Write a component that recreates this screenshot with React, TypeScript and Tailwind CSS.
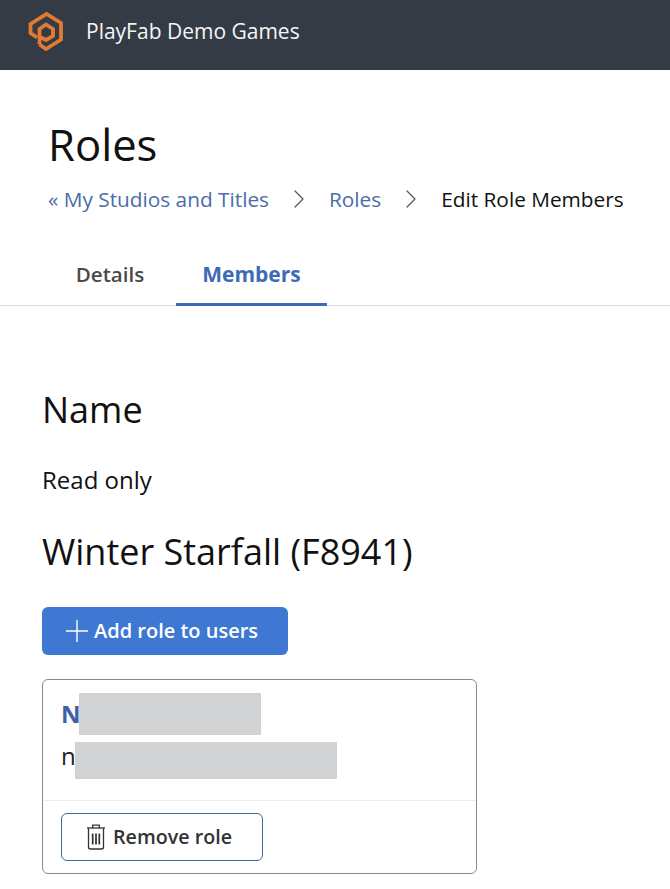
import { ChevronRight } from "lucide-react"

function Logo() {
  return (
    <svg width="50" height="50" viewBox="0 0 50 50" fill="none" stroke="#e07a35" strokeWidth="3.8" strokeLinejoin="miter">
      <path d="M19.5 36.5 L26 41 L41 31.5 V15 L26.5 6 L10.5 16 V25 L17 29.5" />
      <path d="M19.5 36.5 V21 L26 16.5 L33 21 V28 L26 32 L20 29" />
    </svg>
  )
}

function TrashIcon() {
  return (
    <svg width="32" height="32" viewBox="0 0 32 32" fill="none" stroke="#333" strokeWidth="1.3">
      <path d="M12.7 7 V4.2 H19.3 V7" />
      <path d="M7 7 H25" />
      <path d="M8.5 7 V26 Q8.5 28 10.5 28 H21.5 Q23.5 28 23.5 26 V7" />
      <path d="M12.7 12.5 V23.5 M16 12.5 V23.5 M19.3 12.5 V23.5" strokeWidth="1.7" />
    </svg>
  )
}

export default function App() {
  return (
    <div className="h-[889px] w-[670px] overflow-hidden bg-white font-['Open_Sans',sans-serif]">
      {/* Header */}
      <div className="flex h-[70px] items-center bg-[#343b45] pl-[20px]">
        <div className="-mt-[4px]">
          <Logo />
        </div>
        <span className="-mt-[6px] ml-[16px] text-[21px] text-[#f4f5f6]">PlayFab Demo Games</span>
      </div>

      {/* Title and breadcrumb */}
      <div className="pl-[48px] pt-[45px]">
        <h1 className="text-[43.6px] leading-[58px] text-[#111]">Roles</h1>
        <div className="mt-[12px] flex items-center text-[20.8px] leading-[28px] text-[#111]">
          <span className="text-[#4a6da7]">« My Studios and Titles</span>
          <ChevronRight className="mx-[14px] -my-[2px] h-[32px] w-[32px] text-[#555]" strokeWidth={0.9} />
          <span className="text-[#4a6da7]">Roles</span>
          <ChevronRight className="mx-[14px] -my-[2px] h-[32px] w-[32px] text-[#555]" strokeWidth={0.9} />
          <span>Edit Role Members</span>
        </div>
      </div>

      {/* Tabs */}
      <div className="mt-[39px] flex h-[54px] border-b border-[#dcdcdc] pl-[48px]">
        <div className="flex h-[54px] w-[128px] justify-center pr-[4px] pt-[7px] text-[20.6px] font-semibold text-[#4a4a4a]">
          Details
        </div>
        <div className="flex h-[54px] w-[151px] justify-center border-b-[3px] border-[#3f6bb5] pt-[7px] text-[21px] font-bold text-[#3f6bb5]">
          Members
        </div>
      </div>

      {/* Content */}
      <div className="pl-[42px] pt-[79px]">
        <div className="text-[36px] leading-[50px] text-[#111]">Name</div>
        <div className="mt-[29px] text-[24px] leading-[32px] text-[#111]">Read only</div>
        <div className="mt-[31px] text-[36px] leading-[50px] text-[#111]">Winter Starfall (F8941)</div>

        <button className="mt-[30px] flex h-[48px] w-[246px] items-center rounded-[6px] bg-[#3f78d2] pl-[24px] text-[20px] font-semibold text-white">
          <svg width="22" height="22" viewBox="0 0 22 22" stroke="currentColor" strokeWidth="1.4">
            <path d="M0 11 H22 M11 0 V22" />
          </svg>
          <span className="ml-[6px]">Add role to users</span>
        </button>

        {/* Member card */}
        <div className="mt-[24px] w-[435px] rounded-[6px] border border-[#8a8a8a]">
          <div className="relative h-[121px] border-b border-[#eeeeee] pl-[18px] pt-[17px]">
            <div className="text-[24px] font-bold leading-[34px] text-[#3f5fa8]">N</div>
            <div className="mt-[8px] text-[24px] leading-[34px] text-[#222]">n</div>
            <div className="absolute left-[36px] top-[13px] h-[42px] w-[182px] bg-[#d1d2d4]" />
            <div className="absolute left-[32px] top-[62px] h-[37px] w-[262px] bg-[#d1d2d4]" />
          </div>
          <div className="pb-[12px] pl-[18px] pt-[12px]">
            <button className="flex h-[48px] w-[202px] items-center rounded-[6px] border border-[#3f6ba5] pl-[18px] text-[19.7px] font-semibold text-[#333]">
              <TrashIcon />
              <span className="ml-[1px]">Remove role</span>
            </button>
          </div>
        </div>
      </div>
    </div>
  )
}
